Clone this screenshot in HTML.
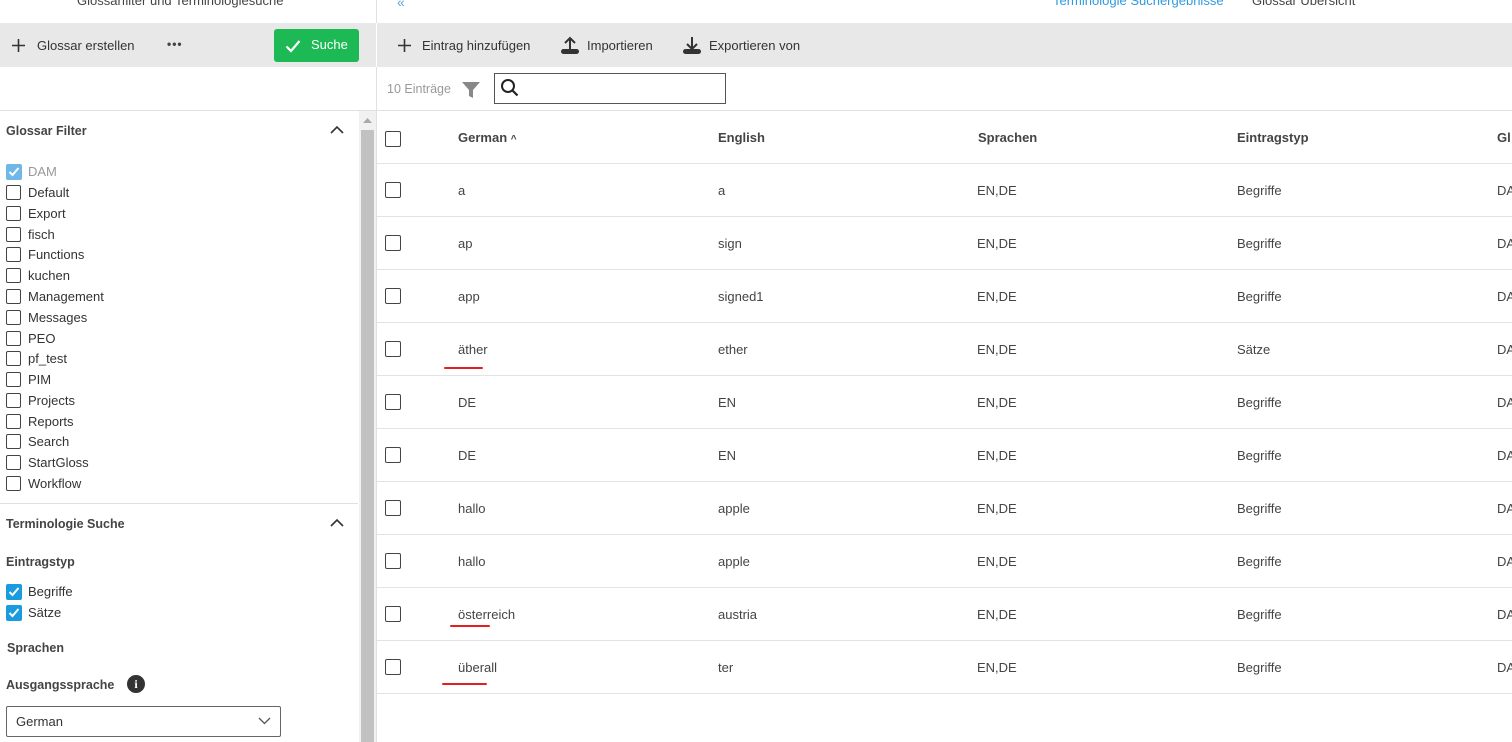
<!DOCTYPE html>
<html><head><meta charset="utf-8"><style>
*{box-sizing:border-box;margin:0;padding:0}
body{width:1512px;height:742px;overflow:hidden;font-family:"Liberation Sans",sans-serif;font-size:13px;color:#333;background:#fff;position:relative}
.abs{position:absolute}
.cb{position:absolute;width:15px;height:15px;border:1.5px solid #444;border-radius:2px;background:#fff}
.cbc{position:absolute;width:16px;height:16px;border-radius:2px;background:#1a9be0}
.cbc svg{position:absolute;left:2px;top:2px}
.fl{position:absolute;left:28px;font-size:13px;color:#333}
.th{position:absolute;top:130px;font-weight:bold;font-size:13px;color:#444}
.row{position:absolute;left:377px;width:1135px;height:53px;border-bottom:1px solid #e3e3e3}
.row span{position:absolute;top:19px;font-size:13px;color:#444}
.rcb{position:absolute;left:8px;top:18px;width:16px;height:16px;border:1.5px solid #444;border-radius:2px}
.ul{position:absolute;height:2px;background:#e02020;border-radius:1px}
</style></head><body>
<div class="abs" style="left:77px;top:-7px;font-size:13px;color:#444">Glossarfilter und Terminologiesuche</div>
<div class="abs" style="left:397px;top:-6px;color:#5aa9e0;font-size:14px">«</div>
<div class="abs" style="left:1053px;top:-7px;color:#2e9ae0;font-size:13px">Terminologie Suchergebnisse</div>
<div class="abs" style="left:1252px;top:-7px;color:#444;font-size:13px">Glossar Übersicht</div>
<div class="abs" style="left:376px;top:0;width:1px;height:742px;background:#e0e0e0"></div>
<div class="abs" style="left:0;top:23px;width:1512px;height:44px;background:#e8e8e8"></div>
<div class="abs" style="left:376px;top:23px;width:1px;height:44px;background:#fff"></div>
<svg class="abs" style="left:11px;top:38px" width="15" height="15"><path d="M7.5 1v13M1 7.5h13" stroke="#333" stroke-width="1.6"/></svg>
<div class="abs" style="left:37px;top:38px;font-size:13px;color:#333">Glossar erstellen</div>
<div class="abs" style="left:167px;top:37px;font-size:12px;color:#444;font-weight:bold;letter-spacing:1px">•••</div>
<div class="abs" style="left:274px;top:29px;width:85px;height:33px;background:#1db954;border-radius:3px"></div>
<svg class="abs" style="left:285px;top:39px" width="16" height="14"><path d="M1.5 7.5l4.5 4.5 8.5-10" stroke="#fff" stroke-width="2.2" fill="none"/></svg>
<div class="abs" style="left:311px;top:37px;color:#fff;font-size:13px">Suche</div>
<svg class="abs" style="left:397px;top:38px" width="15" height="15"><path d="M7.5 1v13M1 7.5h13" stroke="#333" stroke-width="1.6"/></svg>
<div class="abs" style="left:422px;top:38px;font-size:13px;color:#333">Eintrag hinzufügen</div>
<svg class="abs" style="left:560px;top:35px" width="20" height="20"><path d="M10 14V3M5 8l5-5 5 5" stroke="#333" stroke-width="2" fill="none"/><rect x="1" y="14" width="18" height="5" rx="2.5" fill="#333"/></svg>
<div class="abs" style="left:587px;top:38px;font-size:13px;color:#333">Importieren</div>
<svg class="abs" style="left:682px;top:35px" width="20" height="20"><path d="M10 2v12M5 9l5 5 5-5" stroke="#333" stroke-width="2" fill="none"/><rect x="1" y="14" width="18" height="5" rx="2.5" fill="#333"/></svg>
<div class="abs" style="left:709px;top:38px;font-size:13px;color:#333">Exportieren von</div>
<div class="abs" style="left:0;top:110px;width:1512px;height:1px;background:#e0e0e0"></div>
<div class="abs" style="left:387px;top:82px;font-size:12.5px;color:#999">10 Einträge</div>
<svg class="abs" style="left:462px;top:82px" width="18" height="16"><path d="M0 0h18l-7 8v8l-4-2v-6z" fill="#888"/></svg>
<div class="abs" style="left:494px;top:73px;width:232px;height:31px;border:1px solid #555"></div>
<svg class="abs" style="left:500px;top:78px" width="20" height="20"><circle cx="8" cy="8" r="6" stroke="#222" stroke-width="2" fill="none"/><path d="M12.5 12.5l5 5" stroke="#222" stroke-width="2.2"/></svg>
<div class="abs" style="left:6px;top:124px;font-weight:bold;font-size:12.5px;color:#444">Glossar Filter</div>
<svg class="abs" style="left:330px;top:125px" width="14" height="10"><path d="M1 8l6-6 6 6" stroke="#333" stroke-width="1.6" fill="none"/></svg>
<div class="cbc" style="left:6px;top:164px;background:#6fb7e6"><svg width="12" height="12"><path d="M1.5 6l3 3 6-7" stroke="#fff" stroke-width="2" fill="none"/></svg></div>
<div class="fl" style="top:164px;color:#999">DAM</div>
<div class="cb" style="left:6px;top:185px"></div><div class="fl" style="top:185px">Default</div>
<div class="cb" style="left:6px;top:206px"></div><div class="fl" style="top:206px">Export</div>
<div class="cb" style="left:6px;top:227px"></div><div class="fl" style="top:227px">fisch</div>
<div class="cb" style="left:6px;top:247px"></div><div class="fl" style="top:247px">Functions</div>
<div class="cb" style="left:6px;top:268px"></div><div class="fl" style="top:268px">kuchen</div>
<div class="cb" style="left:6px;top:289px"></div><div class="fl" style="top:289px">Management</div>
<div class="cb" style="left:6px;top:310px"></div><div class="fl" style="top:310px">Messages</div>
<div class="cb" style="left:6px;top:331px"></div><div class="fl" style="top:331px">PEO</div>
<div class="cb" style="left:6px;top:351px"></div><div class="fl" style="top:351px">pf_test</div>
<div class="cb" style="left:6px;top:372px"></div><div class="fl" style="top:372px">PIM</div>
<div class="cb" style="left:6px;top:393px"></div><div class="fl" style="top:393px">Projects</div>
<div class="cb" style="left:6px;top:414px"></div><div class="fl" style="top:414px">Reports</div>
<div class="cb" style="left:6px;top:434px"></div><div class="fl" style="top:434px">Search</div>
<div class="cb" style="left:6px;top:455px"></div><div class="fl" style="top:455px">StartGloss</div>
<div class="cb" style="left:6px;top:476px"></div><div class="fl" style="top:476px">Workflow</div>
<div class="abs" style="left:0;top:503px;width:358px;height:1px;background:#e0e0e0"></div>
<div class="abs" style="left:6px;top:517px;font-weight:bold;font-size:12.5px;color:#444">Terminologie Suche</div>
<svg class="abs" style="left:330px;top:518px" width="14" height="10"><path d="M1 8l6-6 6 6" stroke="#333" stroke-width="1.6" fill="none"/></svg>
<div class="abs" style="left:6px;top:555px;font-weight:bold;font-size:12.5px;color:#444">Eintragstyp</div>
<div class="cbc" style="left:6px;top:584px"><svg width="12" height="12"><path d="M1.5 6l3 3 6-7" stroke="#fff" stroke-width="2" fill="none"/></svg></div>
<div class="fl" style="top:584px">Begriffe</div>
<div class="cbc" style="left:6px;top:605px"><svg width="12" height="12"><path d="M1.5 6l3 3 6-7" stroke="#fff" stroke-width="2" fill="none"/></svg></div>
<div class="fl" style="top:605px">Sätze</div>
<div class="abs" style="left:7px;top:641px;font-weight:bold;font-size:12.5px;color:#444">Sprachen</div>
<div class="abs" style="left:6px;top:678px;font-weight:bold;font-size:12.5px;color:#444">Ausgangssprache</div>
<div class="abs" style="left:127px;top:675px;width:18px;height:18px;border-radius:50%;background:#333;color:#fff;font-size:12px;font-weight:bold;text-align:center;line-height:18px;font-family:'Liberation Serif',serif">i</div>
<div class="abs" style="left:6px;top:706px;width:275px;height:31px;border:1px solid #666;border-radius:2px"></div>
<div class="abs" style="left:16px;top:714px;font-size:13px;color:#333">German</div>
<svg class="abs" style="left:258px;top:717px" width="13" height="8"><path d="M1 1l5.5 5.5L12 1" stroke="#555" stroke-width="1.3" fill="none"/></svg>
<div class="abs" style="left:359px;top:111px;width:17px;height:631px;background:#f1f1f1"></div>
<svg class="abs" style="left:363px;top:117px" width="9" height="6"><path d="M0 6l4.5-5 4.5 5z" fill="#aaa"/></svg>
<div class="abs" style="left:361px;top:130px;width:13px;height:612px;background:#c1c1c1"></div>
<div class="row" style="top:111px"><div class="rcb" style="top:20px"></div></div>
<div class="th" style="left:458px">German <span style="font-size:10px">^</span></div>
<div class="th" style="left:718px">English</div>
<div class="th" style="left:978px">Sprachen</div>
<div class="th" style="left:1237px">Eintragstyp</div>
<div class="th" style="left:1497px">Gl</div>
<div class="row" style="top:164px"><div class="rcb"></div><span style="left:81px">a</span><span style="left:341px">a</span><span style="left:600px">EN,DE</span><span style="left:860px">Begriffe</span><span style="left:1120px">DA</span></div>
<div class="row" style="top:217px"><div class="rcb"></div><span style="left:81px">ap</span><span style="left:341px">sign</span><span style="left:600px">EN,DE</span><span style="left:860px">Begriffe</span><span style="left:1120px">DA</span></div>
<div class="row" style="top:270px"><div class="rcb"></div><span style="left:81px">app</span><span style="left:341px">signed1</span><span style="left:600px">EN,DE</span><span style="left:860px">Begriffe</span><span style="left:1120px">DA</span></div>
<div class="row" style="top:323px"><div class="rcb"></div><span style="left:81px">äther</span><span style="left:341px">ether</span><span style="left:600px">EN,DE</span><span style="left:860px">Sätze</span><span style="left:1120px">DA</span></div>
<div class="row" style="top:376px"><div class="rcb"></div><span style="left:81px">DE</span><span style="left:341px">EN</span><span style="left:600px">EN,DE</span><span style="left:860px">Begriffe</span><span style="left:1120px">DA</span></div>
<div class="row" style="top:429px"><div class="rcb"></div><span style="left:81px">DE</span><span style="left:341px">EN</span><span style="left:600px">EN,DE</span><span style="left:860px">Begriffe</span><span style="left:1120px">DA</span></div>
<div class="row" style="top:482px"><div class="rcb"></div><span style="left:81px">hallo</span><span style="left:341px">apple</span><span style="left:600px">EN,DE</span><span style="left:860px">Begriffe</span><span style="left:1120px">DA</span></div>
<div class="row" style="top:535px"><div class="rcb"></div><span style="left:81px">hallo</span><span style="left:341px">apple</span><span style="left:600px">EN,DE</span><span style="left:860px">Begriffe</span><span style="left:1120px">DA</span></div>
<div class="row" style="top:588px"><div class="rcb"></div><span style="left:81px">österreich</span><span style="left:341px">austria</span><span style="left:600px">EN,DE</span><span style="left:860px">Begriffe</span><span style="left:1120px">DA</span></div>
<div class="row" style="top:641px"><div class="rcb"></div><span style="left:81px">überall</span><span style="left:341px">ter</span><span style="left:600px">EN,DE</span><span style="left:860px">Begriffe</span><span style="left:1120px">DA</span></div>
<div class="ul" style="left:444px;top:367px;width:39px"></div>
<div class="ul" style="left:450px;top:625px;width:40px"></div>
<div class="ul" style="left:442px;top:683px;width:45px"></div>
</body></html>
